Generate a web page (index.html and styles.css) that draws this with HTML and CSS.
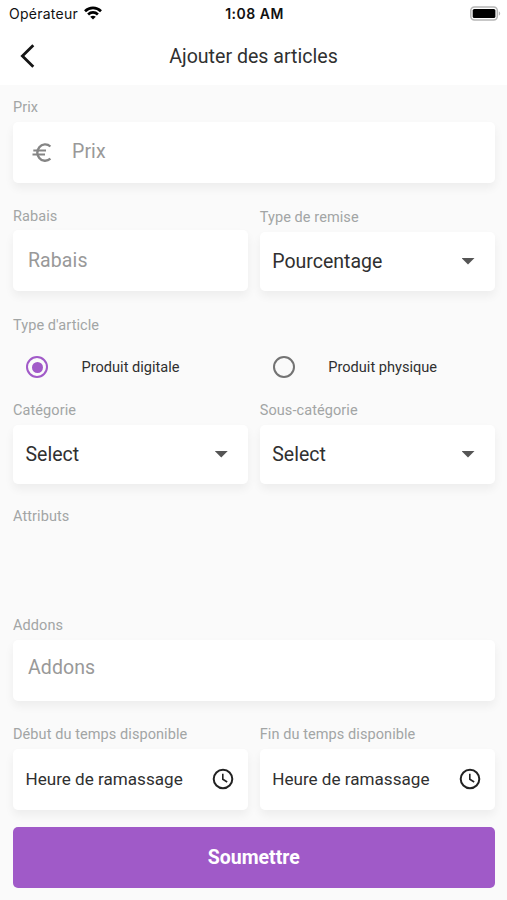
FILE: index.html
```html
<!DOCTYPE html>
<html lang="fr">
<head>
<meta charset="utf-8">
<meta name="viewport" content="width=device-width, initial-scale=1">
<title>Ajouter des articles</title>
<link rel="stylesheet" href="styles.css">
</head>
<body>
<header class="top">
  <div class="status">
    <div class="carrier"><span class="carrier-name">Opérateur</span>
      <svg class="wifi" viewBox="0 0 18 14" width="18" height="14"><g fill="none" stroke="#000" stroke-width="2.700"><path d="M1 5.200C5.600.8 12.400.8 17 5.200"/><path d="M4.100 8.400C6.900 5.800 11.100 5.800 13.900 8.400"/></g><path d="M9 13.600 6.200 10.800Q9 8.700 11.800 10.800Z"/></svg>
    </div>
    <time class="clock">1:08 AM</time>
    <svg class="battery" viewBox="0 0 31 15" width="31" height="15"><rect x=".8" y=".9" width="26.500" height="13" rx="3.600" fill="#fff" stroke="#b5b5b5" stroke-width="1.500"/><rect x="2.700" y="2.900" width="22.700" height="9.200" rx="1.600"/><path d="M28.800 5.300C30.700 6.100 30.700 8.800 28.800 9.700Z" fill="#b5b5b5"/></svg>
  </div>
  <nav class="nav">
    <button class="back" aria-label="Retour"><svg viewBox="0 0 16 24" width="16" height="24"><path d="M14.300 1.300 3.400 12l10.900 10.700" fill="none" stroke="#151515" stroke-width="2.800"/></svg></button>
    <h1 class="title"><span>Ajouter des articles</span></h1>
  </nav>
</header>
<main class="form">
  <section class="field price">
    <span class="label">Prix</span>
    <div class="card input with-icon">
      <svg class="euro" viewBox="0 0 20 20" width="20" height="20"><g fill="none" stroke="#858585" stroke-width="2.300"><path d="M18.400 3.500C15.300.6 9.900.7 7.300 4.200 4.900 7.500 4.900 11.700 7.300 15c2.600 3.500 8 3.600 11.100.7"/><path d="M1.300 7.600H14M.5 11.600H13" stroke-width="2"/></g></svg>
      <span>Prix</span>
    </div>
  </section>
  <div class="pair discount">
    <section class="field"><span class="label">Rabais</span><div class="card input">Rabais</div></section>
    <section class="field kind"><span class="label">Type de remise</span><div class="card select"><span>Pourcentage</span><i class="arrow"></i></div></section>
  </div>
  <section class="field type"><span class="label">Type d'article</span>
    <div class="pair radios">
      <div class="option"><i class="radio on"></i><span>Produit digitale</span></div>
      <div class="option"><i class="radio"></i><span>Produit physique</span></div>
    </div>
  </section>
  <div class="pair categories">
    <section class="field"><span class="label">Catégorie</span><div class="card select"><span>Select</span><i class="arrow"></i></div></section>
    <section class="field"><span class="label">Sous-catégorie</span><div class="card select"><span>Select</span><i class="arrow"></i></div></section>
  </div>
  <section class="field attributes"><span class="label">Attributs</span></section>
  <section class="field addons"><span class="label">Addons</span><div class="card input">Addons</div></section>
  <div class="pair times">
    <section class="field"><span class="label">Début du temps disponible</span><div class="card time"><span>Heure de ramassage</span><svg class="dial" viewBox="0 0 22 22" width="22" height="22"><g fill="none" stroke="#222"><circle cx="11" cy="11" r="9.300" stroke-width="2"/><path d="M10.800 5.700V11.300L15.200 14" stroke-width="1.600"/></g></svg></div></section>
    <section class="field"><span class="label">Fin du temps disponible</span><div class="card time"><span>Heure de ramassage</span><svg class="dial" viewBox="0 0 22 22" width="22" height="22"><g fill="none" stroke="#222"><circle cx="11" cy="11" r="9.300" stroke-width="2"/><path d="M10.800 5.700V11.300L15.200 14" stroke-width="1.600"/></g></svg></div></section>
  </div>
  <button class="submit"><span>Soumettre</span></button>
</main>
</body>
</html>
```
FILE: styles.css
```css
* { box-sizing: border-box; }
body { margin: 0; height: 900px; overflow: hidden; background: #fafafa; color: #303030; font-family: Roboto, sans-serif; }
button { border: 0; padding: 0; background: none; font-family: inherit; }
svg { display: block; flex: none; }
.top { height: 85px; background: #fff; }
.status { display: grid; grid-template-columns: 1fr auto 1fr; height: 28px; padding: 0 7px 0 9px; align-items: center; color: #111; font-family: Inter, sans-serif; font-size: 14px; }
.carrier { display: flex; align-items: center; gap: 6px; margin-top: -2px; }
.carrier-name { letter-spacing: .25px; }
.wifi { margin-top: -1px; }
.clock { margin-top: -2px; font-weight: 600; letter-spacing: .5px; }
.battery { justify-self: end; margin: -2px -1px 0 0; }
.nav { display: grid; grid-template-columns: 60px 1fr 60px; align-items: center; height: 56px; }
.back { padding-left: 19px; }
.title { margin: 0; padding-top: 1px; text-align: center; font-size: 19.600px; line-height: 25px; font-weight: 400; }
.form { padding: 13px 12.500px 0 13px; }
.field { display: flex; flex-direction: column; min-width: 0; }
.label { color: #a2a5a5; font-size: 14.500px; line-height: 20px; letter-spacing: .08px; }
.card { display: flex; align-items: center; height: 61px; margin-top: 4px; border-radius: 5px; background: #fff; box-shadow: 0 5px 10px rgba(0,0,0,.055); }
.input { padding: 0 15px 2px; color: #999; font-size: 19.500px; letter-spacing: .1px; }
.with-icon { gap: 20px; padding-left: 19px; }
.euro { margin-top: 2px; }
.pair { display: grid; grid-template-columns: 1fr 1fr; column-gap: 12px; align-items: start; }
.discount { margin-top: 24px; }
.discount .card { margin-top: 3px; }
.discount .input { padding-bottom: 0; }
.discount .kind { margin-top: 1px; }
.discount .select { margin-top: 4px; }
.select { height: 58.500px; padding: 0 20px 0 12.500px; justify-content: space-between; font-size: 19.500px; }
.arrow { width: 13px; height: 6.500px; background: #555; clip-path: polygon(0 0, 100% 0, 50% 100%); }
.type { margin-top: 25px; }
.radios { margin-top: 19px; }
.option { display: flex; height: 24px; align-items: center; gap: 33.500px; padding-left: 13px; font-size: 14.600px; }
.radio { display: flex; width: 22px; height: 22px; border: 2px solid #737373; border-radius: 50%; }
.radio.on { border-color: #a15ac8; }
.radio.on::before { content: ""; width: 11px; height: 11px; margin: auto; border-radius: 50%; background: #a15ac8; }
.categories { margin-top: 22px; }
.attributes { margin-top: 23.500px; height: 109px; }
.addons .input { padding-bottom: 7px; }
.times { margin-top: 24px; }
.time { padding: 0 14px 1px 12.500px; justify-content: space-between; font-size: 17.100px; }
.submit { display: block; width: 100%; height: 61px; margin-top: 17px; border-radius: 5px; background: #a05ac8; color: #fff; font-size: 19.500px; font-weight: 700; }
```
